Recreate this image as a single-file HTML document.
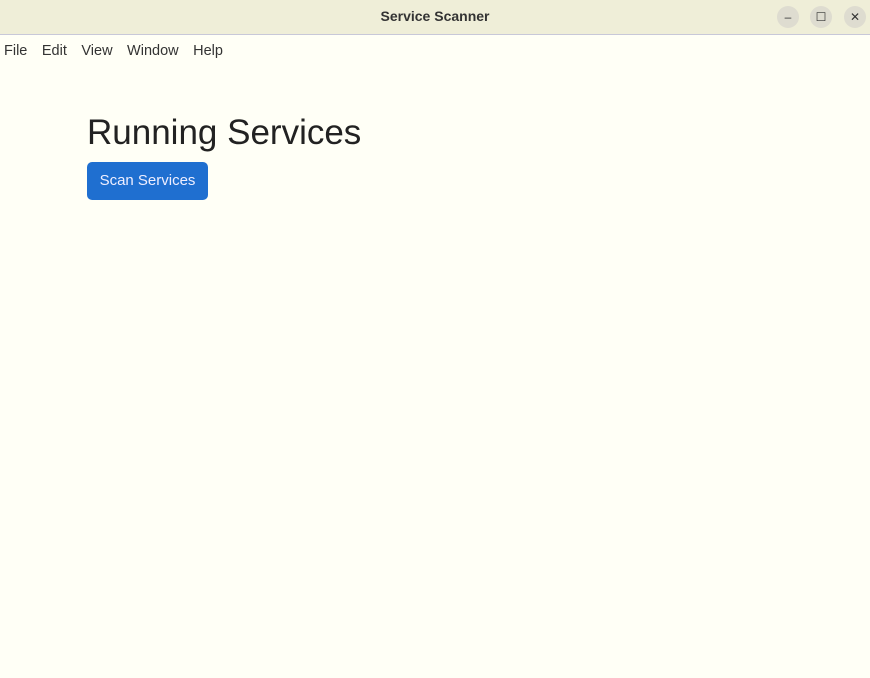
<!DOCTYPE html>
<html><head><style>
body{margin:0;width:870px;height:678px;overflow:hidden;background:#fffff6;font-family:"Liberation Sans",sans-serif;position:relative}
.tb{position:absolute;left:0;top:0;width:870px;height:34px;background:#efeed8;border-bottom:1px solid #c8c8d8}
.tt{position:absolute;top:8px;width:870px;text-align:center;font-weight:bold;font-size:14px;color:#333}
.wb{position:absolute;top:6px;width:22px;height:22px;border-radius:50%;background:#dedcd0;font-size:12px;text-align:center;line-height:22px;color:#333}
.menu{position:absolute;top:43px;left:4px;font-size:14.5px;color:#333}
.menu span{margin-right:14.5px}
h1{position:absolute;left:87px;top:113px;margin:0;font-weight:normal;font-size:35px;color:#222}
.btn{position:absolute;left:87px;top:162px;width:121px;height:38px;background:#1f6fd0;border-radius:5px;color:#eef;font-size:15px;text-align:center;line-height:38px}
</style></head><body>
<div class="tb"><div class="tt">Service Scanner</div>
<div class="wb" style="left:777px">–</div><div class="wb" style="left:810px">☐</div><div class="wb" style="left:844px">✕</div></div>
<div class="menu"><span>File</span><span>Edit</span><span>View</span><span>Window</span><span>Help</span></div>
<h1>Running Services</h1>
<div class="btn">Scan Services</div>
</body></html>
